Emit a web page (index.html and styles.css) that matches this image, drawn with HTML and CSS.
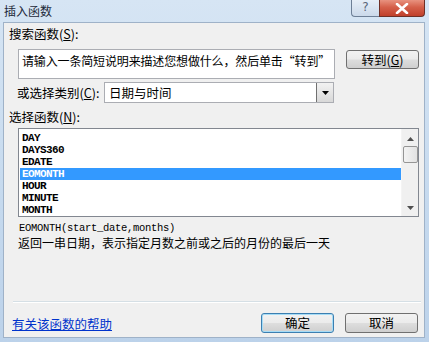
FILE: index.html
```html
<!DOCTYPE html>
<html lang="zh-CN">
<head>
<meta charset="utf-8">
<title>插入函数</title>
<link rel="stylesheet" href="styles.css">
</head>
<body>
<div class="window">
  <div class="titlebar">
    <span class="title">插入函数</span>
    <div class="caption-btns">
      <div class="cap-help">?</div>
      <div class="cap-close">
        <svg width="14" height="11" viewBox="0 0 14 11"><path d="M2 1 L12 10 M12 1 L2 10" stroke="#fff" stroke-width="2.6" stroke-linecap="round"/></svg>
      </div>
    </div>
  </div>
  <div class="panel">
    <div class="label l-search">搜索函数(<u>S</u>):</div>
    <div class="row row-search">
      <div class="textbox">请输入一条简短说明来描述您想做什么，然后单击“转到”</div>
      <div class="btn btn-go">转到(<u>G</u>)</div>
    </div>
    <div class="row row-cat">
      <span class="label-cat">或选择类别(<u>C</u>):</span>
      <div class="combo">
        <span class="combo-text">日期与时间</span>
        <div class="combo-arrow"><svg width="7" height="4" viewBox="0 0 7 4"><path d="M0 0 H7 L3.5 4 Z" fill="#000"/></svg></div>
      </div>
    </div>
    <div class="label l-func">选择函数(<u>N</u>):</div>
    <div class="listbox">
      <ul class="items">
        <li>DAY</li>
        <li>DAYS360</li>
        <li>EDATE</li>
        <li class="sel">EOMONTH</li>
        <li>HOUR</li>
        <li>MINUTE</li>
        <li>MONTH</li>
      </ul>
      <div class="scrollbar">
        <svg class="sb-up" width="7" height="4" viewBox="0 0 7 4"><path d="M0 4 H7 L3.5 0 Z" fill="#505050"/></svg>
        <div class="sb-thumb"></div>
        <svg class="sb-down" width="7" height="4" viewBox="0 0 7 4"><path d="M0 0 H7 L3.5 4 Z" fill="#505050"/></svg>
      </div>
    </div>
    <div class="syntax">EOMONTH(start_date,months)</div>
    <div class="desc">返回一串日期，表示指定月数之前或之后的月份的最后一天</div>
    <div class="sep"></div>
    <div class="footer">
      <a class="help-link" href="#">有关该函数的帮助</a>
      <div class="footer-btns">
        <div class="btn btn-ok">确定</div>
        <div class="btn btn-cancel">取消</div>
      </div>
    </div>
  </div>
</div>
</body>
</html>
```
FILE: styles.css
```css
* { box-sizing: border-box; }
html, body { margin: 0; padding: 0; }
body {
  font-family: "Noto Sans CJK SC", "Noto Sans", sans-serif;
  font-size: 12px;
  color: #000;
  width: 429px;
  height: 342px;
  overflow: hidden;
}
u { text-decoration: underline; }
.window {
  width: 429px;
  height: 342px;
  background: linear-gradient(180deg, #d6e5f4 0%, #c5d9ee 60%, #bcd2ea 100%);
  display: flex;
  flex-direction: column;
}
.titlebar {
  height: 22px;
  display: flex;
  justify-content: space-between;
  align-items: flex-start;
  padding-left: 4px;
}
.title {
  font-size: 12px;
  line-height: 22px;
  color: #1e2a3a;
}
.caption-btns {
  display: flex;
  margin-right: 4px;
}
.cap-help {
  width: 28px;
  height: 17px;
  border: 1px solid #6d7f96;
  border-top: none;
  border-right: none;
  border-radius: 0 0 0 4px;
  background: linear-gradient(180deg, #e6eef7, #cbd9ea);
  color: #5a6679;
  font-family: "DejaVu Sans", sans-serif;
  font-size: 12px;
  text-align: center;
  line-height: 15px;
}
.cap-close {
  width: 46px;
  height: 17px;
  border: 1px solid #6e3026;
  border-top: none;
  border-radius: 0 0 4px 0;
  background: linear-gradient(180deg, #e8927f 0%, #d5604a 45%, #c0402b 100%);
  display: flex;
  align-items: center;
  justify-content: center;
}
.panel {
  margin: 0 4px 4px 3px;
  flex: 1;
  background: #f0f0f0;
  border: 1px solid #9fb2c8;
  display: flex;
  flex-direction: column;
  padding-left: 5px;
}
.label {
  font-size: 12.5px;
  line-height: 16px;
}
.l-search { margin-top: 3px; }
.row { display: flex; }
.row-search {
  margin-top: 7px;
  padding-left: 9px;
  align-items: flex-start;
}
.textbox {
  width: 317px;
  height: 30px;
  background: #fff;
  border: 1px solid #abadb3;
  font-size: 12px;
  letter-spacing: -0.15px;
  line-height: 16px;
  padding: 3px 0 0 3px;
  white-space: nowrap;
  overflow: hidden;
}
.btn {
  height: 19px;
  border: 1px solid #707070;
  border-radius: 3px;
  background: linear-gradient(180deg, #f2f2f2 0%, #ebebeb 48%, #dddddd 52%, #cfcfcf 100%);
  font-size: 12.5px;
  line-height: 17px;
  text-align: center;
}
.btn-go {
  width: 73px;
  margin-left: 11px;
  margin-top: 1px;
}
.row-cat {
  margin-top: 3px;
  padding-left: 8px;
  align-items: center;
}
.label-cat {
  width: 87px;
  font-size: 12.5px;
}
.combo {
  width: 230px;
  height: 21px;
  background: #fff;
  border: 1px solid #abadb3;
  display: flex;
  align-items: center;
  justify-content: space-between;
}
.combo-text {
  padding-left: 4px;
  font-size: 12.5px;
}
.combo-arrow {
  width: 17px;
  height: 19px;
  border-left: 1px solid #707070;
  background: linear-gradient(180deg, #f2f2f2, #d8d8d8);
  display: flex;
  align-items: center;
  justify-content: center;
}
.l-func { margin-top: 6px; }
.listbox {
  margin-top: 3px;
  margin-left: 9px;
  width: 401px;
  height: 89px;
  background: #fff;
  border: 1px solid #828790;
  display: flex;
  justify-content: space-between;
}
.items {
  list-style: none;
  margin: 3px 0 0 1px;
  padding: 0;
  width: 381px;
}
.items li {
  font-family: "Liberation Mono", monospace;
  font-weight: bold;
  font-size: 11px;
  line-height: 12px;
  height: 12px;
  padding-left: 2px;
  letter-spacing: -0.6px;
}
.items li.sel {
  background: #3399ff;
  color: #fff;
}
.scrollbar {
  width: 17px;
  background: #f0f0f0;
  border-left: 1px solid #f4f4f4;
  display: flex;
  flex-direction: column;
  align-items: center;
}
.sb-up { margin-top: 8px; }
.sb-thumb {
  margin-top: 5px;
  width: 15px;
  height: 17px;
  border: 1px solid #959595;
  border-radius: 2px;
  background: linear-gradient(90deg, #f3f3f3, #e2e2e2);
}
.sb-down { margin-top: auto; margin-bottom: 6px; }
.syntax {
  margin-top: 5px;
  padding-left: 10px;
  font-family: "Liberation Mono", monospace;
  font-size: 10.5px;
  letter-spacing: -0.3px;
  line-height: 12px;
}
.syntax::first-line { font-weight: normal; }
.desc {
  margin-top: 1px;
  padding-left: 9px;
  font-size: 12px;
  line-height: 16px;
}
.sep {
  margin-top: 50px;
  margin-left: 4px;
  width: 408px;
  height: 2px;
  border-top: 1px solid #d5dfe5;
  border-bottom: 1px solid #fff;
}
.footer {
  margin-top: 9px;
  display: flex;
  justify-content: space-between;
  align-items: center;
  padding-right: 6px;
}
.help-link {
  color: #0033cc;
  text-decoration: underline;
  font-size: 12.5px;
  margin-left: 3px;
  margin-top: 2px;
}
.footer-btns { display: flex; gap: 11px; }
.btn-ok, .btn-cancel { width: 73px; height: 20px; line-height: 18px; }
.btn-ok {
  border-color: #3c7fb1;
  box-shadow: inset 0 0 0 1px #a6dcf6;
}
```
